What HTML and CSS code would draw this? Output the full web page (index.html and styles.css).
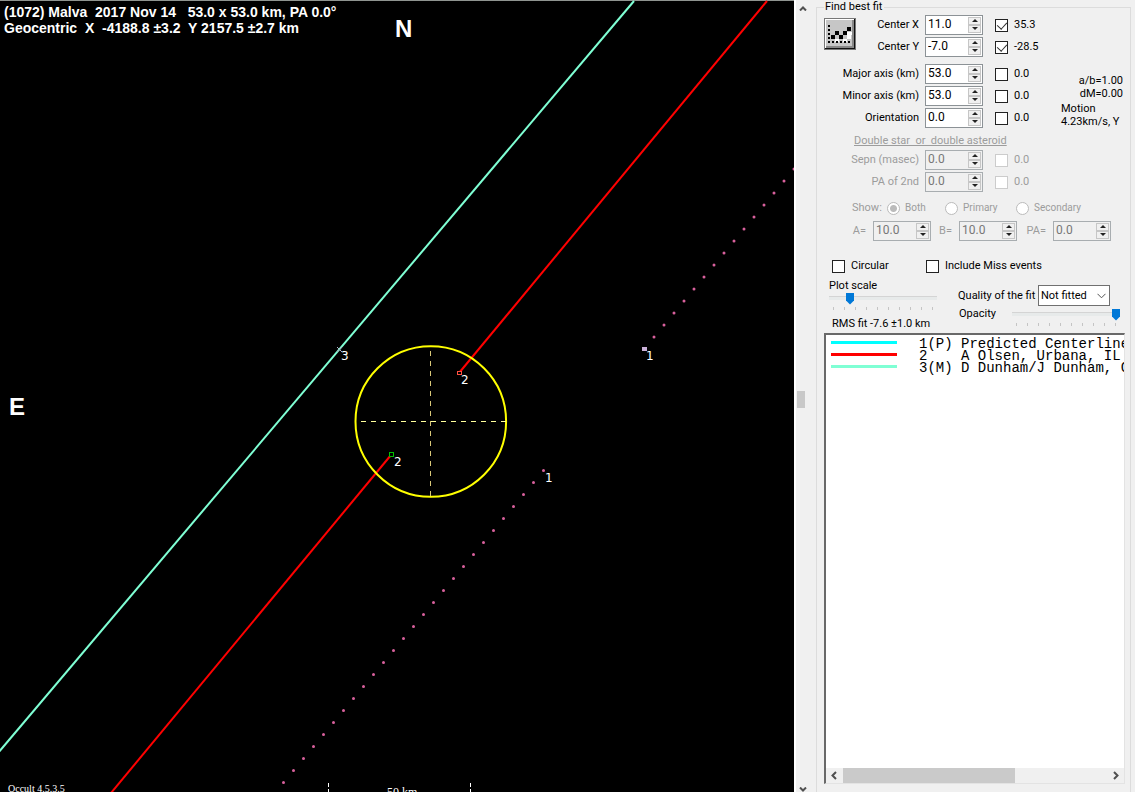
FILE: index.html
```html
<!DOCTYPE html>
<html lang="en">
<head>
<meta charset="utf-8">
<title>Occult - asteroid plot</title>
<link rel="stylesheet" href="styles.css">
</head>
<body>
<main class="window">
  <section class="plot" aria-label="Occultation plot">
    <svg class="plot-canvas" viewBox="0 0 794 792" preserveAspectRatio="xMinYMin slice">
      <line class="edge" x1="0" y1="0.5" x2="794" y2="0.5"/>
      <line class="chord-predicted" x1="644" y1="349" x2="794" y2="169" pathLength="15"/>
      <line class="chord-predicted" x1="543.5" y1="470.5" x2="283.5" y2="782.5" pathLength="26"/>
      <line class="chord-miss" x1="-2" y1="753" x2="634" y2="1"/>
      <line class="chord-observed" x1="767" y1="1" x2="459" y2="373"/>
      <line class="chord-observed" x1="391" y1="455" x2="111" y2="793"/>
      <circle class="fit" cx="430.8" cy="421.5" r="75.3"/>
      <path class="axis" d="M506 421.5H356"/>
      <path class="axis axis-v" d="M430.5 496V346"/>
      <rect class="event-red" x="457.500" y="371.500" width="4" height="3"/>
      <rect class="event-green" x="389.500" y="452.500" width="4" height="4"/>
      <rect class="event-start" x="642" y="347" width="5" height="4"/>
      <path class="event-cross" d="M337 347l5 5M342 347l-5 5"/>
      <g class="mark">
        <text x="341" y="360">3</text>
        <text x="461" y="384">2</text>
        <text x="394" y="466">2</text>
        <text x="545" y="482">1</text>
        <text x="646" y="360">1</text>
      </g>
      <g class="title">
        <text x="4" y="17">(1072) Malva  2017 Nov 14   53.0 x 53.0 km, PA 0.0°</text>
        <text x="4" y="33">Geocentric  X  -4188.8 ±3.2  Y 2157.5 ±2.7 km</text>
      </g>
      <text class="compass" x="395" y="37">N</text>
      <text class="compass" x="9" y="415">E</text>
      <path class="scale" d="M328.500 783v9M470.500 783v9"/>
      <text class="note" x="8" y="792">Occult 4.5.3.5</text>
      <text class="note note-scale" x="387" y="796">50 km</text>
    </svg>
  </section>

  <aside class="side">
    <div class="vscroll">
      <svg width="8" height="5" viewBox="0 0 8 5"><path d="M1 4.500L4 1.500L7 4.500"/></svg>
      <span class="vthumb"></span>
      <svg width="8" height="5" viewBox="0 0 8 5"><path d="M1 .5L4 3.500L7 .5"/></svg>
    </div>
    <fieldset class="group">
      <legend>Find best fit</legend>

      <div class="params">
        <button class="fit-button" type="button" aria-label="Fit">
          <svg width="32" height="32" viewBox="0 0 32 32" shape-rendering="crispEdges">
            <path fill="#c6c6c6" d="M0 0h32v32H0z"/>
            <path fill="#777" d="M0 0h32v1H1v31H0z"/>
            <path fill="#fff" d="M1 1h29v1H2v28H1z"/>
            <path fill="#888" d="M28 2h2v28H2v-2h26z"/>
            <path fill="#111" d="M30 1h1v30H1v-1h29z"/>
            <path fill="#777" d="M31 0h1v32H0v-1h31z"/>
            <path fill="#fff" d="M11 21h4v3h-4zM19 21h4v3h-4zM15 17h4v3h-4zM23 17h4v4h-4zM22 14h6v3h-6z"/>
            <path d="M7 17h4v4H7zM11 13h4v4h-4zM15 17h4v4h-4zM19 13h4v4h-4zM23 9h4v4h-4z"/>
            <path d="M4 7h2v2H4zM4 11h2v2H4zM4 15h2v2H4zM4 19h2v2H4zM4 23h2v2H4zM8 23h2v2H8zM12 23h2v2h-2zM16 23h2v2h-2zM20 23h2v2h-2zM24 23h2v2h-2z"/>
          </svg>
        </button>
        <label class="name r1" for="cx">Center X</label>
        <span class="spin r1"><input id="cx" type="text" value="11.0"><button type="button" aria-label="Up"></button><button type="button" aria-label="Down"></button></span>
        <label class="tick r1"><input type="checkbox" checked>35.3</label>
        <label class="name r2" for="cy">Center Y</label>
        <span class="spin r2"><input id="cy" type="text" value="-7.0"><button type="button" aria-label="Up"></button><button type="button" aria-label="Down"></button></span>
        <label class="tick r2"><input type="checkbox" checked>-28.5</label>
        <label class="name r3" for="major">Major axis (km)</label>
        <span class="spin r3"><input id="major" type="text" value="53.0"><button type="button" aria-label="Up"></button><button type="button" aria-label="Down"></button></span>
        <label class="tick r3"><input type="checkbox">0.0</label>
        <label class="name r4" for="minor">Minor axis (km)</label>
        <span class="spin r4"><input id="minor" type="text" value="53.0"><button type="button" aria-label="Up"></button><button type="button" aria-label="Down"></button></span>
        <label class="tick r4"><input type="checkbox">0.0</label>
        <label class="name r5" for="orient">Orientation</label>
        <span class="spin r5"><input id="orient" type="text" value="0.0"><button type="button" aria-label="Up"></button><button type="button" aria-label="Down"></button></span>
        <label class="tick r5"><input type="checkbox">0.0</label>
        <div class="info">
          <span class="info-right">a/b=1.00</span>
          <span class="info-right">dM=0.00</span>
          <span class="info-gap">Motion</span>
          <span>4.23km/s, Y</span>
        </div>
      </div>

      <div class="double">
        <div class="double-title">Double star&nbsp; or&nbsp; double asteroid</div>
        <div class="params">
          <label class="name r1" for="sepn">Sepn (masec)</label>
          <span class="spin r1"><input id="sepn" type="text" value="0.0" disabled><button type="button" aria-label="Up" disabled></button><button type="button" aria-label="Down" disabled></button></span>
          <label class="tick r1"><input type="checkbox" disabled>0.0</label>
          <label class="name r2" for="pa2">PA of 2nd</label>
          <span class="spin r2"><input id="pa2" type="text" value="0.0" disabled><button type="button" aria-label="Up" disabled></button><button type="button" aria-label="Down" disabled></button></span>
          <label class="tick r2"><input type="checkbox" disabled>0.0</label>
        </div>
        <div class="show">
          <span>Show:</span>
          <label><input type="radio" name="show" checked disabled>Both</label>
          <label><input type="radio" name="show" disabled>Primary</label>
          <label><input type="radio" name="show" disabled>Secondary</label>
        </div>
        <div class="second">
          <label for="a">A=</label>
          <span class="spin"><input id="a" type="text" value="10.0" disabled><button type="button" aria-label="Up" disabled></button><button type="button" aria-label="Down" disabled></button></span>
          <label for="b">B=</label>
          <span class="spin"><input id="b" type="text" value="10.0" disabled><button type="button" aria-label="Up" disabled></button><button type="button" aria-label="Down" disabled></button></span>
          <label for="pa">PA=</label>
          <span class="spin"><input id="pa" type="text" value="0.0" disabled><button type="button" aria-label="Up" disabled></button><button type="button" aria-label="Down" disabled></button></span>
        </div>
      </div>

      <div class="options">
        <label class="tick"><input type="checkbox">Circular</label>
        <label class="tick"><input type="checkbox">Include Miss events</label>
      </div>

      <div class="quality">
        <div class="quality-left">
          <label for="zoom">Plot scale</label>
          <input id="zoom" type="range" min="0" max="100" value="17">
          <span class="marks"></span>
          <span class="rms">RMS fit -7.6 ±1.0 km</span>
        </div>
        <div class="quality-right">
          <div class="quality-row">
            <label for="fitq">Quality of the fit</label>
            <span class="drop"><select id="fitq"><option>Not fitted</option></select><svg width="9" height="6" viewBox="0 0 9 6"><path d="M.5 .8L4.500 4.800L8.500 .8"/></svg></span>
          </div>
          <div class="opacity-row">
            <label for="opacity">Opacity</label>
            <span class="opacity-slider"><input id="opacity" type="range" min="0" max="100" value="100"><span class="marks"></span></span>
          </div>
        </div>
      </div>

      <div class="list">
        <ul class="chords">
          <li><span class="key cyan"></span><span class="num">1(P)</span>Predicted Centerline</li>
          <li><span class="key red"></span><span class="num">2</span>A Olsen, Urbana, IL</li>
          <li><span class="key aqua"></span><span class="num">3(M)</span>D Dunham/J Dunham, G</li>
        </ul>
        <div class="hscroll">
          <svg width="6" height="9" viewBox="0 0 6 9"><path d="M5 1L1.500 4.500L5 8"/></svg>
          <span class="htrack"><span class="hthumb"></span></span>
          <svg width="6" height="9" viewBox="0 0 6 9"><path d="M1 1L4.500 4.500L1 8"/></svg>
        </div>
      </div>
    </fieldset>
  </aside>
</main>
</body>
</html>
```
FILE: styles.css
```css
* { box-sizing: border-box; }
body { margin: 0; background: #f0f0f0; color: #000; font: 11px/14px Roboto, "Liberation Sans", Arial, sans-serif; }
.window { display: flex; height: 100vh; overflow: hidden; }

.plot { flex: 1; min-width: 0; background: #000; overflow: hidden; }
.plot-canvas { display: block; width: 100%; height: 100%; }
.plot-canvas text { fill: #fff; white-space: pre; }
.edge { stroke: #8f9490; }
.chord-predicted { stroke: #d8609c; stroke-width: 3; stroke-linecap: round; stroke-dasharray: 0 1; }
.chord-miss { stroke: #7fffd4; stroke-width: 2; }
.chord-observed { stroke: #f00; stroke-width: 2; }
.fit { fill: none; stroke: #ff0; stroke-width: 2; }
.axis { stroke: #ffff9c; stroke-dasharray: 5 5; shape-rendering: crispEdges; }
.axis-v { stroke: #d9c878; }
.event-red { fill: #000; stroke: #ff5040; }
.event-green { fill: #000; stroke: #00c000; }
.event-start { fill: #c9b0d8; }
.event-cross { stroke: #b0b0c8; }
.mark { font: 12px "DejaVu Sans", Verdana, sans-serif; }
.title { font: bold 14px "Liberation Sans", Arial, sans-serif; }
.compass { font: bold 24px "Liberation Sans", Arial, sans-serif; }
.scale { stroke: #fff; stroke-dasharray: 4 2; }
.note { font: 10px "Liberation Serif", "Times New Roman", serif; }
.note-scale { font-size: 12px; }

.side { flex: none; display: flex; width: 341px; padding-right: 4px; }
.vscroll { flex: none; display: flex; flex-direction: column; align-items: center; justify-content: space-between; width: 15px; margin-right: 7px; padding: 6px 0 0; border-left: 2px solid #fff; }
.vscroll svg, .hscroll svg { flex: none; fill: none; stroke: #505050; stroke-width: 2; }
.vthumb { align-self: flex-start; width: 8px; height: 17px; margin-left: 1px; background: #c8c8c8; }
.group { flex: 1; display: flex; flex-direction: column; min-width: 0; margin: 0 0 -4px; padding: 0 5px 11px 7px; border: 1px solid #dcdcdc; }
legend { height: 14px; padding: 0 2px 0 1px; }

.params { display: grid; grid-template-columns: 95px 58px 54px 1fr; grid-auto-rows: 22px; column-gap: 6px; align-items: center; }
.params .r1 { grid-row: 1; }
.params .r2 { grid-row: 2; }
.params .r3 { grid-row: 3; }
.params .r4 { grid-row: 4; }
.params .r5 { grid-row: 5; }
.params:has(.r5) { grid-template-rows: 22px 27px 22px 22px 22px; }
.params:has(.r5) .r2 { align-self: start; margin-top: 1px; }
.params:has(.r5) label.r2 { margin-top: 4px; }
.name { grid-column: 1; justify-self: end; white-space: nowrap; }
.params .spin { grid-column: 2; }
.params .tick { grid-column: 3; margin-left: 6px; }
.fit-button { grid-area: 1 / 1 / 3 / 2; align-self: start; width: 32px; height: 32px; margin: 4px 0 0; padding: 0; border: 0; background: none; }
.fit-button svg { display: block; }
.info { grid-area: 3 / 4 / 6 / 5; align-self: start; display: flex; flex-direction: column; padding: 11px 2px 0 12px; line-height: 13px; white-space: nowrap; }
.info-right { align-self: flex-end; }
.info-gap { margin-top: 2px; }

.spin { display: grid; grid-template-columns: 1fr 13px; grid-template-rows: 8px 8px; width: 58px; height: 20px; padding: 1px; border: 1px solid #8c9296; background: #fff; }
.spin input { grid-row: 1 / 3; width: 100%; min-width: 0; height: 16px; padding: 0 0 2px 1px; border: 0; background: none; color: inherit; font: 12px/14px Roboto, "Liberation Sans", Arial, sans-serif; }
.spin button { position: relative; padding: 0; border: 1px solid #c6c6c6; background: #f0f0f0; }
.spin button::after { content: ""; position: absolute; left: 3px; top: 1px; border: solid transparent; border-width: 0 3px 3px; border-bottom-color: #222; }
.spin button:last-child::after { border-width: 3px 3px 0; border-top-color: #222; }
.tick { display: flex; align-items: center; gap: 6px; white-space: nowrap; }
.tick input { flex: none; position: relative; appearance: none; width: 13px; height: 13px; margin: 0; border: 1px solid #222; background: #fff; }
.tick input:checked::after { content: ""; position: absolute; left: 3px; top: 0; width: 5px; height: 8px; border: solid #333; border-width: 0 1px 1px 0; rotate: 42deg; }

.double { color: #9c9c9c; }
.double-title { height: 20px; padding: 5px 0 0 30px; text-decoration: underline; }
.double .spin { background: #f0f0f0; border-color: #a8adb0; }
.double .spin input { color: #777; }
.double .tick input { border-color: #ccc; }
.show { display: grid; grid-template-columns: 35px 58px 71px 1fr; align-items: center; height: 22px; margin-top: 4px; padding-left: 28px; }
.show label { display: flex; align-items: center; gap: 5px; font-size: 10px; }
.show input { flex: none; appearance: none; width: 13px; height: 13px; margin: 0; border: 1px solid #bbb; border-radius: 50%; background: #fff; }
.show input:checked { background: radial-gradient(circle, #bbb 3px, #fff 4px); }
.second { display: grid; grid-template-columns: 20px 58px 28px 58px 36px 58px; align-items: center; height: 22px; margin-top: 1px; padding-left: 29px; }
.second label { justify-self: end; padding-right: 7px; }

.options { display: grid; grid-template-columns: 94px 1fr; height: 22px; margin-top: 13px; padding-left: 8px; }
.quality { display: flex; justify-content: space-between; height: 56px; padding: 2px 1px 0 5px; }
.quality-left { display: flex; flex-direction: column; width: 108px; white-space: nowrap; }
.quality-right { width: 166px; padding-top: 6px; }
.quality-row, .opacity-row { display: flex; justify-content: space-between; }
.quality-row { align-items: center; height: 21px; padding-right: 14px; }
.opacity-row { padding: 1px 4px 0 1px; }
.opacity-slider { width: 108px; padding-top: 1px; }
.rms { padding: 7px 0 0 3px; }
input[type=range] { appearance: none; display: block; width: 100%; height: 13px; margin: 0; background: linear-gradient(#d4d4d4, #d4d4d4) 0 4px / 100% 1px no-repeat, linear-gradient(#e7eaea, #e7eaea) 0 5px / 100% 3px no-repeat; }
.quality-left input { margin-top: -1px; }
input[type=range]::-webkit-slider-thumb { appearance: none; width: 8px; height: 12px; background: #0078d7; clip-path: polygon(0 0, 100% 0, 100% 8px, 50% 100%, 0 8px); }
.marks { display: block; height: 3px; margin: 2px 4px 0; background: repeating-linear-gradient(90deg, #c4c4c4 0 1px, transparent 1px 11px); }
.drop { position: relative; width: 72px; }
.drop select { appearance: none; display: block; width: 100%; height: 21px; padding: 0 2px; border: 1px solid #707070; border-radius: 0; background: #fff; color: #000; font: inherit; }
.drop svg { position: absolute; right: 4px; top: 8px; fill: none; stroke: #555; pointer-events: none; }

.list { flex: 1; display: flex; flex-direction: column; min-height: 0; border: solid; border-width: 2px 1px 1px 2px; border-color: #696969 #e3e3e3 #e3e3e3 #696969; background: #fff; overflow: hidden; }
.chords { flex: 1; margin: 0; padding: 3px 0 0; list-style: none; font: 14px/12px "Liberation Mono", "Courier New", monospace; overflow: hidden; }
.chords li { display: flex; white-space: pre; }
.key { flex: none; width: 66px; height: 3px; margin: 3px 22px 0 5px; }
.cyan { background: #0ff; }
.red { background: #f00; }
.aqua { background: #7fffd4; }
.num { flex: none; width: 42px; }
.hscroll { flex: none; display: flex; align-items: center; height: 15px; padding: 0 5px; background: #f0f0f0; }
.htrack { flex: 1; height: 100%; padding: 0 6px; }
.hthumb { display: block; width: 65%; height: 100%; background: #cacaca; }
```
